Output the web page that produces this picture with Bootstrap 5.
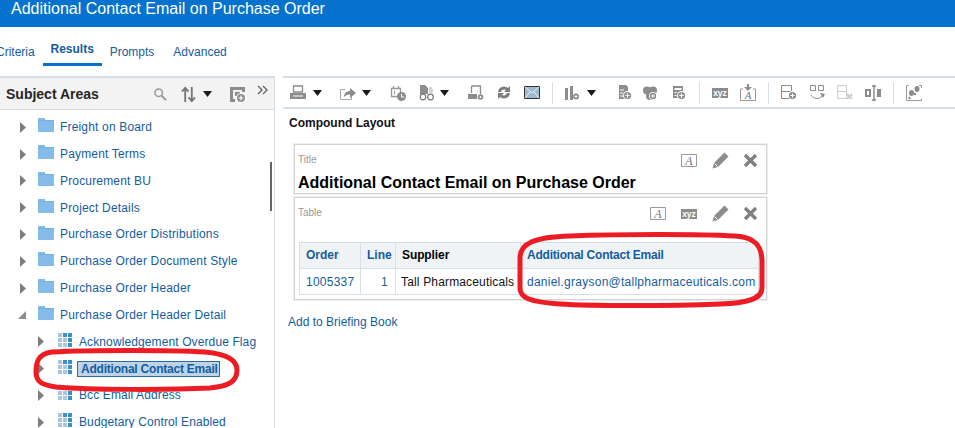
<!DOCTYPE html>
<html lang="en"><head><meta charset="utf-8"><title>Additional Contact Email</title>
<link href="https://cdn.jsdelivr.net/npm/bootstrap@5.3.0/dist/css/bootstrap.min.css" rel="stylesheet">
<script src="https://cdn.jsdelivr.net/npm/bootstrap@5.3.0/dist/js/bootstrap.bundle.min.js"></script>
<style>
html,body{height:428px;overflow:hidden;background:#fff}
body{position:relative;font-family:"Liberation Sans",Arial,sans-serif;font-size:12px;color:#145c9e;line-height:1.2}
.bi-title{height:27px;background:#0572ce;color:#fff;font-size:16px;padding-left:11px;line-height:17px}
.tabbar{height:49px;padding-top:18px}
.tabitem{color:#145c9e;font-size:12px;height:20px;line-height:14px;text-decoration:none}
.tabitem:not([href]){color:#145c9e}
.tabitem.on{font-weight:700;width:59px;margin:-3px 8px 0 8px;height:24px;text-align:center;border-bottom:3px solid #0572ce}
.t-crit{margin-left:-4px}
.t-adv{margin-left:19px}
.work{height:352px}
.leftp{width:275px;border-right:1px solid #d6dfe6;flex:none;overflow:hidden;position:relative}
.sahead{height:34px;border-top:2px solid #d6dfe6;border-bottom:1px solid #d6dfe6;background:#f3f3f3;padding:1px 0 0 6px;color:#252525;font-weight:700;font-size:14px}
.sahead span{margin-right:46px}
.row-t{height:26.8px;padding-left:20px;white-space:nowrap}
.row-t.kid{padding-left:38px}
.foldt{margin-left:6px;letter-spacing:.17px}
.kidtext{margin-left:7px;letter-spacing:.11px}
.tri{margin-right:12px;flex:none}
.tri-dn{margin-left:-2px}
.kid .tri{margin-right:14px}
.lift{margin-bottom:4px}
.selname{background:#bcd3e8;border:1px solid #2a6aa5;font-weight:700;padding:0 1px 0 3px;margin-left:5px;line-height:14px;letter-spacing:-.22px}
.sbar{position:absolute;left:270px;top:86px;width:2px;height:49px;background:#666}
.rightp{flex:1;min-width:0;padding-left:8px}
.tools{height:33px;border-top:2px solid #d6dfe6;border-bottom:2px solid #d6dfe6;padding-left:7px}
.vsep{width:1px;height:22px;background:#d6dfe6;flex:none}
.m5{margin-left:5px}.m6{margin-left:6px}.m7{margin-left:7px}.m8{margin-left:8px}.m11{margin-left:11px}.m12{margin-left:12px}.m13{margin-left:13px}.m16{margin-left:16px}.m18{margin-left:18px}.m19{margin-left:19px}.m23{margin-left:23px}.m17{margin-left:17px}
.clay{color:#111;font-weight:700;font-size:12px;padding:7px 0 0 6px;height:35px}
.vbox{border:1px solid #d3d3d3;box-shadow:0 0 0 .5px #ddd;margin-left:11px;width:473px;background:#fff;padding:4px 3px 0 3px}
.b-title{height:50px}
.b-table{height:103px;margin-top:3px}
.vlabel{color:#999;font-size:10px;line-height:13px;padding-top:4px}
.vacts{gap:15px;padding-right:5px;padding-top:3px}
.xbtn{margin-left:-1px}
.bigt{font-size:16px;font-weight:700;color:#000;line-height:18px;margin-top:5px}
.rtab{width:460px;margin:20px 0 0 1px;font-size:12px;table-layout:fixed;--bs-table-bg:transparent}
.rtab th,.rtab td{border:1px solid #d6dfe6!important;padding:0 6px;vertical-align:middle;color:#145c9e;box-shadow:none;white-space:nowrap}
.rtab th{background:#f0f3f6;height:26px;font-weight:700}
.rtab td{height:26px;letter-spacing:.25px;padding-top:2px}
.rtab td.sup{color:#111;padding-left:5px;letter-spacing:.16px}
.rtab th.sup{color:#000;letter-spacing:-.1px}
.rtab th.addl{letter-spacing:-.22px}
.rtab .ln{padding-right:7px}
.c1{width:61px}.c2{width:35px}.c3{width:125px}
.briefl{margin:15px 0 0 5px;color:#145c9e;display:block;text-decoration:none;font-size:12px}
a.briefl:not([href]){color:#145c9e}
.annot{position:absolute;left:0;top:0;pointer-events:none}
svg{display:block;flex:none}
</style></head><body>
<svg width="0" height="0" class="position-absolute"><defs>
<symbol id="down" viewBox="0 0 9 6"><path d="M0 0h9L4.500 6z" fill="#1a1a1a"/></symbol>
<symbol id="rt" viewBox="0 0 6 11"><path d="M0 0l6 5.500L0 11z" fill="#7d7d7d"/></symbol>
<symbol id="dn" viewBox="0 0 8 8"><path d="M8 0v8H0z" fill="#8a8a8a"/></symbol>
<symbol id="fold" viewBox="0 0 16 14"><path d="M0 0h7v2h9v12H0z" fill="#85bbe8"/><path d="M0 2h16v1H0z" fill="#7aaee0"/></symbol>
<symbol id="grid" viewBox="0 0 14 14"><g fill="#a9c6e0"><path d="M0 0h4v4H0zM0 5h4v4H0zM0 10h4v4H0zM5 5h4v4H5zM5 10h4v4H5z"/></g><g fill="#3a8fc9"><path d="M5 0h4v4H5zM10 0h4v4h-4zM10 5h4v4h-4zM10 10h4v4h-4z"/></g></symbol>
<symbol id="plus" viewBox="0 0 10 10"><circle cx="5" cy="5" r="5" fill="#fff"/><circle cx="5" cy="5" r="4" fill="#8c8c8c"/><path d="M5 2.500v5M2.500 5h5" stroke="#fff" stroke-width="1.200"/></symbol>
<symbol id="pencil" viewBox="0 0 17 17"><path d="M12.500.5l4 4L6 15l-5.500 1.500L2 11z" fill="#8c8c8c"/><path d="M2.500 11.500l3 3" stroke="#fff"/></symbol>
<symbol id="xx" viewBox="0 0 15 15"><path d="M2 2l11 11M13 2L2 13" stroke="#7f7f7f" stroke-width="3.200" fill="none"/></symbol>
<symbol id="aa" viewBox="0 0 16 13"><path d="M.5.500h15v12H.5z" fill="none" stroke="#9a9a9a"/><text x="8" y="11" font-family="Liberation Serif" font-style="italic" font-size="12" fill="#777" text-anchor="middle">A</text></symbol>
<symbol id="xyz" viewBox="0 0 16 10"><path d="M0 0h16v10H0z" fill="#8c8c8c"/><text x="8" y="8" font-family="Liberation Sans" font-weight="700" font-size="8.500" fill="#fff" text-anchor="middle">xyz</text></symbol>
</defs></svg>

<header class="bi-title">Additional Contact Email on Purchase Order</header>
<nav class="tabbar d-flex align-items-start">
 <a class="tabitem t-crit">Criteria</a>
 <a class="tabitem on">Results</a>
 <a class="tabitem">Prompts</a>
 <a class="tabitem t-adv">Advanced</a>
</nav>
<main class="work d-flex">
 <aside class="leftp">
  <div class="sahead d-flex align-items-center"><span>Subject Areas</span>
   <svg width="15" height="15" viewBox="0 0 16 16" class="ms-2"><circle cx="6" cy="6" r="4" fill="none" stroke="#999" stroke-width="1.600"/><path d="M9 9l5 5" stroke="#999" stroke-width="2.200"/></svg>
   <svg width="15" height="17" viewBox="0 0 16 18" class="m13"><path d="M4.500 17V3M1 6l3.500-4L8 6M11.500 1v14M8 12l3.500 4 3.500-4" stroke="#777" stroke-width="2" fill="none"/></svg>
   <svg width="9" height="6" class="m7"><use href="#down"/></svg>
   <svg width="17" height="17" viewBox="0 0 17 17" class="m17"><path d="M1 1h15v5h-3V4H4v9h2v3H1z" fill="#8c8c8c"/><path d="M6 6h5v4H6z" fill="#8c8c8c"/><use href="#plus" x="7" y="7" width="10" height="10"/></svg>
   <svg width="12" height="10" viewBox="0 0 12 10" class="m11 mb-2"><path d="M1 1l4 4-4 4M6 1l4 4-4 4" stroke="#666" stroke-width="1.400" fill="none"/></svg>
  </div>
  <div class="pt-1">
   <div class="row-t d-flex align-items-center"><svg class="tri" width="6" height="11"><use href="#rt"/></svg><svg class="lift" width="16" height="14"><use href="#fold"/></svg><span class="foldt">Freight on Board</span></div>
   <div class="row-t d-flex align-items-center"><svg class="tri" width="6" height="11"><use href="#rt"/></svg><svg class="lift" width="16" height="14"><use href="#fold"/></svg><span class="foldt">Payment Terms</span></div>
   <div class="row-t d-flex align-items-center"><svg class="tri" width="6" height="11"><use href="#rt"/></svg><svg class="lift" width="16" height="14"><use href="#fold"/></svg><span class="foldt">Procurement BU</span></div>
   <div class="row-t d-flex align-items-center"><svg class="tri" width="6" height="11"><use href="#rt"/></svg><svg class="lift" width="16" height="14"><use href="#fold"/></svg><span class="foldt">Project Details</span></div>
   <div class="row-t d-flex align-items-center"><svg class="tri" width="6" height="11"><use href="#rt"/></svg><svg class="lift" width="16" height="14"><use href="#fold"/></svg><span class="foldt">Purchase Order Distributions</span></div>
   <div class="row-t d-flex align-items-center"><svg class="tri" width="6" height="11"><use href="#rt"/></svg><svg class="lift" width="16" height="14"><use href="#fold"/></svg><span class="foldt">Purchase Order Document Style</span></div>
   <div class="row-t d-flex align-items-center"><svg class="tri" width="6" height="11"><use href="#rt"/></svg><svg class="lift" width="16" height="14"><use href="#fold"/></svg><span class="foldt">Purchase Order Header</span></div>
   <div class="row-t d-flex align-items-center"><svg class="tri tri-dn" width="8" height="8"><use href="#dn"/></svg><svg class="lift" width="16" height="14"><use href="#fold"/></svg><span class="foldt">Purchase Order Header Detail</span></div>
   <div class="row-t kid d-flex align-items-center"><svg class="tri" width="6" height="11"><use href="#rt"/></svg><svg class="lift" width="14" height="14"><use href="#grid"/></svg><span class="kidtext">Acknowledgement Overdue Flag</span></div>
   <div class="row-t kid d-flex align-items-center"><svg class="tri" width="6" height="11"><use href="#rt"/></svg><svg class="lift" width="14" height="14"><use href="#grid"/></svg><span class="selname">Additional Contact Email</span></div>
   <div class="row-t kid d-flex align-items-center"><svg class="tri" width="6" height="11"><use href="#rt"/></svg><svg class="lift" width="14" height="14"><use href="#grid"/></svg><span class="kidtext">Bcc Email Address</span></div>
   <div class="row-t kid d-flex align-items-center"><svg class="tri" width="6" height="11"><use href="#rt"/></svg><svg class="lift" width="14" height="14"><use href="#grid"/></svg><span class="kidtext">Budgetary Control Enabled</span></div>
  </div>
  <div class="sbar"></div>
 </aside>
 <section class="rightp">
  <div class="tools d-flex align-items-center">
   <svg width="16" height="15" viewBox="0 0 16 15"><path d="M3.500 1h9v6h-9z" fill="none" stroke="#8c8c8c" stroke-width="1.300"/><path d="M0 8h16v6H0z" fill="#8c8c8c"/><path d="M3 11h10" stroke="#fff"/></svg>
   <svg width="9" height="6" class="m7"><use href="#down"/></svg>
   <svg width="16" height="14" viewBox="0 0 16 14" class="m18"><path d="M.5 3.500h5M.5 3.500v10h11V9" fill="none" stroke="#aaa"/><path d="M4 11c0-4 3-6 6-6V2l6 5-6 5V8.500c-3 0-4.500 1-6 2.500z" fill="#8c8c8c"/></svg>
   <svg width="9" height="6" class="m6"><use href="#down"/></svg>
   <svg width="16" height="16" viewBox="0 0 16 16" class="m19"><path d="M1.500 3.500h9v8h-9zM3.500 1v2M8.500 1v2" fill="none" stroke="#999" stroke-width="1.300"/><path d="M4.500 5.500v4" stroke="#999"/><circle cx="11.500" cy="11.500" r="4.500" fill="#8c8c8c"/><path d="M11.500 9v3h2.500" stroke="#fff" fill="none"/></svg>
   <svg width="16" height="16" viewBox="0 0 16 16" class="m13"><path d="M1 0h5l3 3v6H1z" fill="#8c8c8c"/><path d="M10 3h3M10 5h4M10 7h4" stroke="#aaa"/><circle cx="4" cy="12" r="2.800" fill="#fff" stroke="#777" stroke-width="1.200"/><circle cx="11.500" cy="12" r="2.800" fill="#fff" stroke="#777" stroke-width="1.200"/></svg>
   <svg width="9" height="6" class="m5"><use href="#down"/></svg>
   <svg width="16" height="16" viewBox="0 0 16 16" class="m19"><path d="M3.500 1h9v8" fill="none" stroke="#8c8c8c" stroke-width="1.300"/><path d="M3.500 1v7" stroke="#8c8c8c" stroke-width="1.300"/><path d="M0 9h9v5H0z" fill="#8c8c8c"/><circle cx="12.500" cy="12" r="2.800" fill="#8c8c8c"/><circle cx="12.500" cy="12" r="1" fill="#fff"/></svg>
   <svg width="16" height="15" viewBox="0 0 16 15" class="m12"><path d="M2 7a6 6 0 0 1 10-4l2-2v6H8l2-2a3.500 3.500 0 0 0-5 2zM14 8a6 6 0 0 1-10 4l-2 2V8h6l-2 2a3.500 3.500 0 0 0 5-2z" fill="#7d7d7d"/></svg>
   <svg width="16" height="13" viewBox="0 0 16 13" class="m12"><path d="M.5.500h15v12H.5z" fill="#9fb9cf" stroke="#333"/><path d="M1 1l7 6 7-6M1 12l5-6M15 12l-5-6" fill="none" stroke="#e9f1f7"/></svg>
   <div class="vsep m12"></div>
   <svg width="14" height="14" viewBox="0 0 14 14" class="m12"><path d="M0 2h3v12H0zM5 0h3v14H5z" fill="#8c8c8c"/><circle cx="11" cy="10.500" r="3" fill="#8c8c8c"/><path d="M11 9v3M9.500 10.500h3" stroke="#fff"/></svg>
   <svg width="9" height="6" class="m8"><use href="#down"/></svg>
   <svg width="13" height="15" viewBox="0 0 13 15" class="m23"><path d="M0 0h7l2 2v12H0z" fill="#8c8c8c"/><path d="M1 5h4M1 8h3M1 11h3" stroke="#fff"/><use href="#plus" x="4" y="6" width="9" height="9"/></svg>
   <svg width="14" height="14" viewBox="0 0 14 14" class="m11"><circle cx="4" cy="4.500" r="4" fill="#8c8c8c"/><circle cx="10" cy="4.500" r="4" fill="#8c8c8c"/><circle cx="7" cy="10" r="4" fill="#8c8c8c"/><use href="#plus" x="6" y="6" width="8" height="8"/></svg>
   <svg width="13" height="14" viewBox="0 0 13 14" class="m16"><path d="M0 0h10v12H0z" fill="#8c8c8c"/><path d="M1.500 2h7v2h-7z" fill="#fff"/><path d="M1.500 6h2v1h-2zM1.500 9h2v1h-2z" fill="#fff"/><use href="#plus" x="4" y="5" width="9" height="9"/></svg>
   <div class="vsep m13"></div>
   <svg width="16" height="10" class="m12"><use href="#xyz"/></svg>
   <svg width="16" height="17" viewBox="0 0 16 17" class="m12"><path d="M3 5H.5v11.500h15V5H13" fill="none" stroke="#999"/><path d="M7 0h2v3h3L8 7 4 3h3z" fill="#8c8c8c"/><text x="8" y="15" font-family="Liberation Serif" font-style="italic" font-size="11" fill="#777" text-anchor="middle">A</text></svg>
   <div class="vsep m12"></div>
   <svg width="16" height="15" viewBox="0 0 16 15" class="m12"><path d="M.5.500h10v6H.5zM.5 6.500h10v7H.5z" fill="none" stroke="#8c8c8c"/><use href="#plus" x="7" y="6" width="9" height="9"/></svg>
   <svg width="15" height="15" viewBox="0 0 15 15" class="m13"><path d="M.5.500h5v5h-5zM8.500.500h5v5h-5z" fill="none" stroke="#8c8c8c"/><path d="M1 10c2 4 8 5 11 1" stroke="#8c8c8c" fill="none"/><path d="M10 8l5 1-2 4z" fill="#8c8c8c"/></svg>
   <svg width="16" height="15" viewBox="0 0 16 15" class="m12"><path d="M.5.500h9v6h-9zM.5 6.500h9v7h-9z" fill="none" stroke="#ccc"/><path d="M10 9l5 5M15 9l-5 5" stroke="#ccc" stroke-width="2"/></svg>
   <svg width="16" height="16" viewBox="0 0 16 16" class="m12"><path d="M0 4h6v8H0zM12 4h4v8h-4z" fill="#8c8c8c"/><path d="M2 6h2v4H2z" fill="#fff"/><path d="M9 0v16M7 1h4M7 15h4" stroke="#8c8c8c" stroke-width="1.500"/></svg>
   <div class="vsep m12"></div>
   <svg width="16" height="16" viewBox="0 0 16 16" class="m12"><path d="M2.500.500H.5v15h15v-2M13 .500h2.500V3" fill="none" stroke="#999"/><ellipse cx="11" cy="4" rx="2.500" ry="3" fill="#8c8c8c"/><ellipse cx="5.500" cy="8" rx="2.500" ry="3" fill="#8c8c8c"/><circle cx="9" cy="9" r="1.200" fill="#8c8c8c"/><circle cx="3.500" cy="13" r="1.200" fill="#8c8c8c"/></svg>
  </div>
  <div class="clay">Compound Layout</div>
  <div class="vbox b-title">
   <div class="d-flex justify-content-between">
    <div class="vlabel">Title</div>
    <div class="vacts d-flex align-items-center"><svg width="16" height="13"><use href="#aa"/></svg><svg width="17" height="17"><use href="#pencil"/></svg><svg class="xbtn" width="15" height="15"><use href="#xx"/></svg></div>
   </div>
   <div class="bigt">Additional Contact Email on Purchase Order</div>
  </div>
  <div class="vbox b-table">
   <div class="d-flex justify-content-between">
    <div class="vlabel">Table</div>
    <div class="vacts d-flex align-items-center"><svg width="16" height="13"><use href="#aa"/></svg><svg width="16" height="10"><use href="#xyz"/></svg><svg width="17" height="17"><use href="#pencil"/></svg><svg class="xbtn" width="15" height="15"><use href="#xx"/></svg></div>
   </div>
   <table class="table rtab mb-0">
    <colgroup><col class="c1"><col class="c2"><col class="c3"><col></colgroup>
    <thead><tr><th>Order</th><th class="text-end ln">Line</th><th class="sup">Supplier</th><th class="addl">Additional Contact Email</th></tr></thead>
    <tbody><tr><td>1005337</td><td class="text-end ln">1</td><td class="sup">Tall Pharmaceuticals</td><td>daniel.grayson@tallpharmaceuticals.com</td></tr></tbody>
   </table>
  </div>
  <a class="briefl">Add to Briefing Book</a>
 </section>
</main>
<svg class="annot" width="955" height="428" viewBox="0 0 955 428"><g fill="none" stroke="#ed1c24" stroke-width="5" stroke-linejoin="round"><path d="M36 372C36 362 38 354 52 352C90 350 170 350 205 352C228 354 237 360 237 370C237 381 230 386 210 388C170 390 90 390 56 387C42 385 36 382 36 372z"/><path d="M520 280V258C520 243 535 237 570 236C620 234 700 234 735 236C755 237 762 246 762 262V288C762 298 750 303 720 304C670 306 590 306 560 304C530 302 520 298 520 288z"/></g></svg>
</body></html>
